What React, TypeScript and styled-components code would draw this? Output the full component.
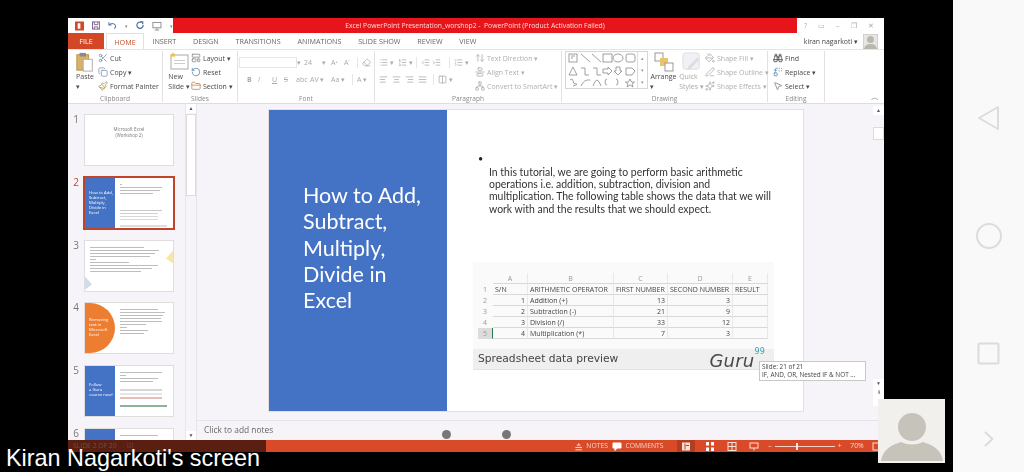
import styled, { createGlobalStyle } from "styled-components";
import {
  Scissors, Copy, Paintbrush, LayoutTemplate, RotateCcw, FolderClosed, Binoculars, Replace, MousePointer2, PaintBucket, PenLine, Sparkles,
  List, ListOrdered, Indent, Outdent, AlignLeft, AlignCenter, AlignRight, AlignJustify, Columns2, ListCollapse, ArrowUpDown, AlignVerticalJustifyCenter, Network,
  Eraser,
} from "lucide-react";

const GlobalStyle = createGlobalStyle`
  html, body {
    margin: 0;
    padding: 0;
    background: #000;
    font-family: "Open Sans", "Liberation Sans", sans-serif;
  }
`;

const Screen = styled.div`
  position: relative;
  width: 1024px;
  height: 472px;
  display: flex;
  overflow: hidden;
  background: #000;
`;

const VideoArea = styled.div`
  flex: 1;
  padding: 18px 69px 20px 68px;
  min-width: 0;
`;

const PptWindow = styled.div`
  height: 434px;
  display: flex;
  flex-direction: column;
  background: #fff;
  filter: blur(0.35px);
`;

/* title bar */
const TitleBar = styled.div`
  height: 15px;
  display: flex;
  flex: none;
`;

const Qat = styled.div`
  width: 105px;
  display: flex;
  align-items: center;
  gap: 8px;
  padding-left: 7px;
  box-sizing: border-box;
  background: #fff;
  color: #888;
  font-size: 5px;
`;

const RedTitle = styled.div`
  flex: 1;
  background: #e8141c;
  color: #ffd9d2;
  font-size: 6.8px;
  display: flex;
  align-items: center;
  justify-content: center;
  padding-right: 20px;
  white-space: nowrap;
`;

const WinButtons = styled.div`
  width: 87px;
  display: flex;
  align-items: center;
  gap: 11px;
  padding-left: 7px;
  box-sizing: border-box;
  color: #aaa;
  font-size: 7px;
`;

/* tabs */
const TabRow = styled.div`
  height: 16px;
  display: flex;
  flex: none;
  align-items: stretch;
  font-size: 7.2px;
  color: #666;
`;

const FileTab = styled.div`
  width: 36px;
  background: #d24726;
  color: #fff;
  display: flex;
  align-items: center;
  justify-content: center;
  margin-right: 2px;
`;

const HomeTab = styled.div`
  width: 38px;
  border: 1px solid #e2e2e2;
  border-bottom: none;
  color: #c8502f;
  display: flex;
  align-items: center;
  justify-content: center;
  box-sizing: border-box;
`;

const Tab = styled.div`
  padding: 0 8.4px;
  display: flex;
  align-items: center;
  white-space: nowrap;
`;

const UserBox = styled.div`
  margin-left: auto;
  display: flex;
  align-items: center;
  gap: 5px;
  padding-right: 6px;
  color: #444;
  font-size: 6.9px;
`;

/* ribbon */
const Ribbon = styled.div`
  height: 55px;
  flex: none;
  display: flex;
  border-top: 1px solid #e4e4e4;
  border-bottom: 1px solid #ddd;
  box-sizing: border-box;
  color: #444;
  font-size: 7px;
  position: relative;
`;

const Group = styled.div<{ $w: number }>`
  width: ${(p) => p.$w}px;
  flex: none;
  display: flex;
  flex-direction: column;
  box-sizing: border-box;
  border-right: 1px solid #e2e2e2;
  margin: 1px 0;
`;

const GroupBody = styled.div<{ $pad?: number }>`
  flex: 1;
  display: flex;
  padding-left: ${(p) => p.$pad ?? 0}px;
  min-height: 0;
`;

const GroupLabel = styled.div`
  height: 9px;
  text-align: center;
  color: #8a8a8a;
  font-size: 6.6px;
  line-height: 11px;
`;

const BigButton = styled.div<{ $w: number; $off?: boolean }>`
  width: ${(p) => p.$w}px;
  flex: none;
  display: flex;
  flex-direction: column;
  align-items: center;
  line-height: 10px;
  font-size: 7px;
  white-space: nowrap;
  color: ${(p) => (p.$off ? "#aaa" : "#4a4a4a")};
`;

const IconSlot = styled.div`
  height: 21px;
  flex: none;
  display: flex;
  align-items: center;
`;

const Stack = styled.div`
  display: flex;
  flex-direction: column;
  flex: none;
`;

const SmallButton = styled.div<{ $off?: boolean }>`
  height: 14px;
  display: flex;
  align-items: center;
  gap: 2px;
  white-space: nowrap;
  color: ${(p) => (p.$off ? "#b0b0b0" : "#4a4a4a")};
`;

const FontColumn = styled.div`
  display: flex;
  flex-direction: column;
  gap: 4px;
  padding: 5px 0 0 1px;
`;

const ToolRow = styled.div`
  height: 13px;
  display: flex;
  align-items: center;
  color: #aaa;
  font-size: 7px;
  white-space: nowrap;
`;

const FontInput = styled.div`
  width: 58px;
  height: 11px;
  border: 1px solid #e6e6e6;
  box-sizing: border-box;
`;

const ToolSlot = styled.span<{ $w: number; $b?: boolean; $i?: boolean; $u?: boolean; $s?: boolean }>`
  width: ${(p) => p.$w}px;
  flex: none;
  display: inline-flex;
  align-items: center;
  font-weight: ${(p) => (p.$b ? 700 : 400)};
  font-style: ${(p) => (p.$i ? "italic" : "normal")};
  text-decoration: ${(p) => (p.$u ? "underline" : p.$s ? "line-through" : "none")};
`;

const VDivider = styled.span<{ $mr?: number }>`
  width: 1px;
  height: 11px;
  flex: none;
  background: #e6e6e6;
  margin-right: ${(p) => p.$mr ?? 4}px;
`;

const ParagraphLeft = styled.div`
  width: 96px;
  flex: none;
  display: flex;
  flex-direction: column;
  gap: 4px;
  padding: 5px 0 0 4px;
  box-sizing: border-box;
  margin-right: 4px;
`;

const Gallery = styled.div`
  width: 83px;
  height: 38px;
  flex: none;
  display: flex;
  border: 1px solid #d6d6d6;
  box-sizing: border-box;
  margin: 0 1px 0 3px;
`;

const GalleryScroll = styled.div`
  width: 9px;
  margin-left: auto;
  border-left: 1px solid #ddd;
  display: flex;
  flex-direction: column;
  justify-content: space-around;
  align-items: center;
  font-size: 5px;
  color: #999;
`;

const CollapseMark = styled.div`
  position: absolute;
  right: 5px;
  bottom: 0;
  color: #777;
  font-size: 8px;
`;

/* workspace */
const Workspace = styled.div`
  flex: 1;
  min-height: 0;
  display: flex;
  background: #f6f4f8;
`;

const SlidePanel = styled.div`
  width: 129px;
  flex: none;
  display: flex;
  border-right: 1px solid #e6e4ea;
  box-sizing: border-box;
  overflow: hidden;
`;

const ThumbList = styled.div`
  width: 117px;
  padding-top: 10px;
  display: flex;
  flex-direction: column;
  gap: 10.8px;
`;

const ThumbRow = styled.div`
  display: flex;
  flex: none;
  font-size: 10px;
`;

const ThumbNumber = styled.div<{ $active?: boolean }>`
  width: 16px;
  text-align: right;
  padding-right: 5px;
  box-sizing: border-box;
  line-height: 10px;
  color: ${(p) => (p.$active ? "#c0492f" : "#777")};
`;

const Thumb = styled.div<{ $active?: boolean }>`
  width: ${(p) => (p.$active ? 92 : 90)}px;
  height: ${(p) => (p.$active ? 54 : 52)}px;
  margin: ${(p) => (p.$active ? "-1px" : "0")};
  flex: none;
  position: relative;
  display: flex;
  box-sizing: border-box;
  background: #fff;
  overflow: hidden;
  border: ${(p) => (p.$active ? "2px solid #c0432a" : "1px solid #dedede")};
`;

const ThumbSide = styled.div<{ $color?: string; $round?: boolean; $pt?: number }>`
  width: 30px;
  flex: none;
  padding: ${(p) => p.$pt ?? 12}px 0 0 4px;
  box-sizing: border-box;
  background: ${(p) => p.$color ?? "#4472c4"};
  color: #fff;
  font-size: 4.2px;
  line-height: 5px;
  ${(p) => (p.$round ? "border-radius: 0 26px 26px 0;" : "")}
`;

const ThumbBody = styled.div`
  flex: 1;
  display: flex;
  flex-direction: column;
  gap: 2px;
  padding: 6px 6px 0 5px;
  min-width: 0;
`;

const Bar = styled.div<{ $w: number; $c?: string; $h?: number }>`
  width: ${(p) => p.$w}%;
  height: ${(p) => p.$h ?? 1}px;
  flex: none;
  background: ${(p) => p.$c ?? "#bdbdbd"};
`;

const TitleThumbText = styled.div`
  flex: 1;
  text-align: center;
  padding-top: 12px;
  font-size: 4.4px;
  line-height: 5.5px;
  color: #777;
`;

const Corner = styled.div<{ $c: string; $left?: boolean }>`
  position: absolute;
  ${(p) => (p.$left ? "left: 0; bottom: 1px;" : "right: 0; top: 10px;")}
  width: 7px;
  height: 13px;
  background: ${(p) => p.$c};
  clip-path: ${(p) =>
    p.$left ? "polygon(0 0, 100% 60%, 0 100%)" : "polygon(100% 0, 0 60%, 100% 100%)"};
`;

const PanelScroll = styled.div`
  width: 10px;
  margin-left: 1px;
  border-left: 1px solid #e8e6ea;
  display: flex;
  flex-direction: column;
  align-items: center;
  color: #555;
  font-size: 5px;
`;

const ScrollButton = styled.div`
  width: 100%;
  height: 9px;
  flex: none;
  background: #fff;
  display: flex;
  align-items: center;
  justify-content: center;
  line-height: 1;
`;

const ScrollThumb = styled.div<{ $h: number; $top?: number }>`
  width: 100%;
  height: ${(p) => p.$h}px;
  margin-top: ${(p) => p.$top ?? 0}px;
  background: #fff;
  border: 1px solid #dcdcdc;
  box-sizing: border-box;
  flex: none;
`;

const ScrollGap = styled.div`
  flex: 1;
`;

const Editor = styled.div`
  flex: 1;
  min-width: 0;
  display: flex;
  flex-direction: column;
`;

const EditorTop = styled.div`
  flex: 1;
  min-height: 0;
  display: flex;
`;

const Stage = styled.div`
  flex: 1;
  padding: 6px 0 0 72px;
`;

const Slide = styled.div`
  width: 534px;
  height: 301px;
  display: flex;
  background: #fff;
  box-shadow: 0 0 0 1px #e2e0e4;
`;

const SlideSide = styled.div`
  width: 178px;
  flex: none;
  background: #4472c4;
  color: #fff;
  box-sizing: border-box;
  padding: 72px 0 0 34px;
  font-family: Lato, "Open Sans", sans-serif;
  font-size: 21.5px;
  line-height: 26.3px;
`;

const SlideMain = styled.div`
  flex: 1;
  min-width: 0;
  padding: 56px 0 0 26px;
  display: flex;
  flex-direction: column;
`;

const BodyText = styled.div`
  padding-left: 16px;
  box-sizing: border-box;
  position: relative;
  font-family: Lato, "Open Sans", sans-serif;
  font-size: 10.45px;
  line-height: 12.2px;
  color: #333;
  white-space: nowrap;
  &::before {
    content: "•";
    position: absolute;
    left: 5px;
    top: -13px;
    font-size: 9px;
    color: #222;
  }
`;

const SheetPreview = styled.div`
  width: 301px;
  height: 108px;
  margin-top: 47px;
  display: flex;
  flex-direction: column;
  background: #fafafa;
`;

const SheetGrid = styled.div`
  display: grid;
  grid-template-columns: 15px 35px 86px 54px 65px 35px;
  grid-auto-rows: 11px;
  margin: 11px 0 0 5px;
  height: 66px;
  font-family: "Open Sans", sans-serif;
  font-size: 7px;
  line-height: 11px;
  color: #444;
`;

const Cell = styled.div<{ $head?: boolean; $right?: boolean; $sel?: boolean; $line?: boolean }>`
  white-space: nowrap;
  overflow: visible;
  padding: 0 2px;
  text-align: ${(p) => (p.$head ? "center" : p.$right ? "right" : "left")};
  color: ${(p) => (p.$head ? "#999" : "#444")};
  background: ${(p) => (p.$sel ? "#dcdcdc" : "transparent")};
  border-bottom: 1px solid ${(p) => (p.$line ? "#d8d8d8" : "transparent")};
  border-right: 1px solid ${(p) => (p.$sel ? "#2a7a4f" : p.$line ? "#e8e8e8" : "transparent")};
  box-sizing: border-box;
`;

const SheetCaption = styled.div`
  margin-top: 10px;
  height: 21px;
  background: #efefef;
  display: flex;
  align-items: center;
  justify-content: space-between;
  padding: 0 9px 0 5px;
  border-bottom: 1px solid #e2e2e2;
  box-sizing: border-box;
  color: #444;
  font-family: "DejaVu Sans", sans-serif;
  font-size: 10.7px;
  position: relative;
`;

const GuruMark = styled.div`
  font-family: "DejaVu Sans", sans-serif;
  font-style: italic;
  font-size: 18px;
  line-height: 20px;
  letter-spacing: 0.2px;
  color: #4a4a4a;
  display: flex;
  padding-top: 5px;
  sup {
    font-size: 8px;
    font-style: normal;
    color: #35a3b8;
    line-height: 8px;
    margin-top: -3px;
  }
`;

const SlideTip = styled.div`
  position: absolute;
  left: 286px;
  top: 12px;
  width: 107px;
  height: 20px;
  padding: 1px 0 0 2px;
  box-sizing: border-box;
  background: #fff;
  border: 1px solid #c8c8c8;
  color: #444;
  font-family: "Open Sans", sans-serif;
  font-size: 6.4px;
  line-height: 8.5px;
  white-space: nowrap;
  z-index: 3;
`;

const EditorScroll = styled.div`
  width: 11px;
  flex: none;
  padding: 2px 0 14px;
  display: flex;
  flex-direction: column;
  color: #555;
  font-size: 5px;
`;

const NotesBar = styled.div`
  height: 20px;
  flex: none;
  border-top: 1px solid #e6e4ea;
  box-sizing: border-box;
  display: flex;
  align-items: center;
  padding: 0 0 2px 7px;
  font-size: 8.4px;
  color: #666;
`;

/* status bar */
const StatusBar = styled.div`
  height: 12px;
  flex: none;
  display: flex;
  align-items: center;
  background: #d94a29;
  color: #f6d3c6;
  font-size: 6.8px;
  line-height: 8px;
`;

const StatusLeft = styled.div`
  display: flex;
  align-items: center;
  gap: 10px;
  padding-left: 5px;
  color: #f0b8a6;
`;

const StatusRight = styled.div`
  margin-left: auto;
  display: flex;
  align-items: center;
  height: 100%;
`;

const StatusItem = styled.div<{ $w: number; $on?: boolean; $ml?: number }>`
  width: ${(p) => p.$w}px;
  margin-left: ${(p) => p.$ml ?? 0}px;
  height: 100%;
  display: flex;
  align-items: center;
  justify-content: center;
  gap: 3px;
  white-space: nowrap;
  background: ${(p) => (p.$on ? "#b43c20" : "transparent")};
`;

const ZoomTrack = styled.div`
  width: 60px;
  height: 1px;
  background: #f6d3c6;
  position: relative;
  &::after {
    content: "";
    position: absolute;
    left: 21px;
    top: -3px;
    width: 2px;
    height: 7px;
    background: #fbeee8;
  }
`;

/* android nav */
const NavBar = styled.div`
  width: 71px;
  flex: none;
  background: #f9f9f9;
  display: flex;
  flex-direction: column;
  align-items: center;
  box-sizing: border-box;
`;

const NavIcon = styled.svg<{ $mt: number }>`
  margin-top: ${(p) => p.$mt}px;
  fill: none;
  stroke: #dcdcdc;
  stroke-width: 2;
  stroke-linejoin: round;
  stroke-linecap: round;
  flex: none;
`;

/* overlays from the meeting app */
const Caption = styled.div`
  position: absolute;
  left: 0;
  top: 440px;
  width: 266px;
  height: 32px;
  box-sizing: border-box;
  padding: 8px 0 0 6px;
  background: rgba(0, 0, 0, 0.58);
  color: #fff;
  font-family: "Liberation Sans", Arial, sans-serif;
  font-size: 23.4px;
  line-height: 20px;
  white-space: nowrap;
  z-index: 5;
`;

const AvatarTile = styled.div`
  position: absolute;
  left: 878px;
  top: 399px;
  width: 67px;
  height: 64px;
  background: #f2f0ec;
  z-index: 5;
`;

const PagerDot = styled.div<{ $x: number }>`
  position: absolute;
  left: ${(p) => p.$x}px;
  top: 430px;
  width: 9px;
  height: 9px;
  border-radius: 50%;
  background: #777;
  z-index: 5;
`;

const PasteIcon = () => (
  <svg width="20" height="20" viewBox="0 0 20 22">
    <rect x="1" y="3" width="13" height="17" fill="#d9b26a" stroke="#b8924c" />
    <rect x="4" y="1" width="7" height="4" fill="#8a8a8a" />
    <rect x="8" y="8" width="10" height="13" fill="#fff" stroke="#aaa" />
  </svg>
);

const NewSlideIcon = () => (
  <svg width="20" height="19" viewBox="0 0 20 19">
    <rect x="2" y="3" width="17" height="14" fill="#fff" stroke="#aaa" />
    <rect x="5" y="8" width="11" height="1" fill="#ccc" />
    <rect x="5" y="11" width="11" height="1" fill="#ccc" />
    <path d="M4 0 l1 2 2 0-1.500 1.500 .7 2-2.200-1.200-2.200 1.200 .7-2L1 2l2 0z" fill="#e8c45c" />
  </svg>
);

const ArrangeIcon = () => (
  <svg width="20" height="20" viewBox="0 0 20 20">
    <rect x="1" y="1" width="8" height="8" fill="#fff" stroke="#999" />
    <rect x="6" y="6" width="8" height="8" fill="#e9c46a" />
    <rect x="11" y="11" width="8" height="8" fill="#fff" stroke="#999" />
  </svg>
);

const QuickIcon = () => (
  <svg width="20" height="20" viewBox="0 0 22 22">
    <rect x="1" y="1" width="18" height="18" rx="3" fill="#f3eff7" stroke="#ddd" />
    <path d="M19 8 L10 18 l-4 2 1-4 L17 6z" fill="#ddd" />
  </svg>
);

const GalleryShapes = () => (
  <svg width="71" height="36" viewBox="0 0 71 36" fill="none" stroke="#888" strokeWidth="0.8">
    <rect x="3" y="2" width="8" height="8" />
    <path d="M5 4h4M5 6h2" />
    <path d="M15 2l9 8M26 2l9 8" />
    <rect x="37" y="2" width="9" height="8" />
    <ellipse cx="52" cy="6" rx="5" ry="4" />
    <rect x="60" y="2" width="9" height="8" rx="2" />
    <path d="M3 23l4-8 4 8z" />
    <path d="M15 16h4v7h4M27 16h4v7h4" />
    <path d="M37 17h5v-2l4 4-4 4v-2h-5z" />
    <path d="M50 15h4v4h2l-4 4-4-4h2z" />
    <path d="M60 16h6l3 3-3 4h-6z" />
    <path d="M4 28q3-2 3 1t3 3-3 2" />
    <path d="M15 34q3-7 9-6M27 34q2-6 4-6t4 6" />
    <path d="M41 27q-2 0-2 3t2 3M50 27q2 0 2 3t-2 3" />
    <path d="M64 27l1.500 3h3l-2.500 2 1 3-3-2-3 2 1-3-2.500-2h3z" />
  </svg>
);

const StatusGlyph = ({ kind }: { kind: "notes" | "comment" | "normal" | "sorter" | "reading" | "show" | "fit" }) => (
  <svg width="10" height="9" viewBox="0 0 10 9" fill="none" stroke="#f9e2d9" strokeWidth="1">
    {kind === "notes" && <path d="M3 3h4M1.500 5.500h7M1.500 8h7M5 1v2" />}
    {kind === "comment" && <path d="M1 1h8v5H5L3 8.500V6H1z" fill="#fff" stroke="#fff" />}
    {kind === "normal" && (
      <>
        <rect x="1" y=".5" width="8" height="8" fill="#f9e2d9" stroke="none" />
        <path d="M4 1.500v6M5 3.500h3" stroke="#b43c20" />
      </>
    )}
    {kind === "sorter" && <path d="M1 0h3v3.500H1zM6 0h3v3.500H6zM1 5.500h3V9H1zM6 5.500h3V9H6z" fill="#fff" stroke="none" />}
    {kind === "reading" && (
      <>
        <rect x="1" y=".5" width="8" height="8" />
        <path d="M5 .5v8M1 4.500h8" />
      </>
    )}
    {kind === "show" && (
      <>
        <rect x="1" y="1" width="8" height="5" />
        <path d="M5 6v2.500" />
      </>
    )}
    {kind === "fit" && <rect x="1" y="1" width="8" height="7" />}
  </svg>
);

const Thumbs = () => (
  <>
    <ThumbRow>
      <ThumbNumber>1</ThumbNumber>
      <Thumb>
        <TitleThumbText>
          Microsoft Excel
          <br />
          (Workshop 2)
        </TitleThumbText>
      </Thumb>
    </ThumbRow>
    <ThumbRow>
      <ThumbNumber $active>2</ThumbNumber>
      <Thumb $active>
        <ThumbSide>
          How to Add,
          <br />
          Subtract,
          <br />
          Multiply,
          <br />
          Divide in
          <br />
          Excel
        </ThumbSide>
        <ThumbBody>
          <Bar $w={5} />
          <Bar $w={90} />
          <Bar $w={85} />
          <Bar $w={70} />
          <Bar $w={0} $h={12} />
          <Bar $w={90} $c="#c8c8c8" />
          <Bar $w={80} $c="#d0d0d0" />
          <Bar $w={80} $c="#d8d8d8" />
          <Bar $w={80} $c="#d8d8d8" />
          <Bar $w={0} />
          <Bar $w={100} $c="#ddd" $h={2} />
        </ThumbBody>
      </Thumb>
    </ThumbRow>
    <ThumbRow>
      <ThumbNumber>3</ThumbNumber>
      <Thumb>
        <ThumbBody>
          <Bar $w={70} />
          <Bar $w={90} />
          <Bar $w={85} />
          <Bar $w={78} />
          <Bar $w={8} />
          <Bar $w={50} />
          <Bar $w={88} />
          <Bar $w={80} />
          <Bar $w={66} />
        </ThumbBody>
        <Corner $c="#f8e6a6" />
        <Corner $c="#d2dbee" $left />
      </Thumb>
    </ThumbRow>
    <ThumbRow>
      <ThumbNumber>4</ThumbNumber>
      <Thumb>
        <ThumbSide $color="#ed7d31" $round $pt={14}>
          Removing
          <br />
          text in
          <br />
          Microsoft
          <br />
          Excel
        </ThumbSide>
        <ThumbBody>
          <Bar $w={80} />
          <Bar $w={95} />
          <Bar $w={92} />
          <Bar $w={88} />
          <Bar $w={90} />
          <Bar $w={55} />
          <Bar $w={14} />
          <Bar $w={60} />
          <Bar $w={50} />
        </ThumbBody>
      </Thumb>
    </ThumbRow>
    <ThumbRow>
      <ThumbNumber>5</ThumbNumber>
      <Thumb>
        <ThumbSide $pt={16}>
          Follow
          <br />
          a Guru
          <br />
          course now!
        </ThumbSide>
        <ThumbBody>
          <Bar $w={90} />
          <Bar $w={12} />
          <Bar $w={80} />
          <Bar $w={70} />
          <Bar $w={0} $h={3} />
          <Bar $w={90} $c="#d6d6d6" $h={2} />
          <Bar $w={90} $c="#e6e6e6" $h={2} />
          <Bar $w={90} $c="#e8bdb5" $h={2} />
          <Bar $w={0} $h={2} />
          <Bar $w={100} $c="#8ab59b" $h={2} />
        </ThumbBody>
      </Thumb>
    </ThumbRow>
    <ThumbRow>
      <ThumbNumber>6</ThumbNumber>
      <Thumb>
        <ThumbSide />
        <ThumbBody>
          <Bar $w={80} />
        </ThumbBody>
      </Thumb>
    </ThumbRow>
  </>
);

const sheetRows = [
  ["1", "S/N", "ARITHMETIC OPERATOR", "FIRST NUMBER", "SECOND NUMBER", "RESULT"],
  ["2", "1", "Addition (+)", "13", "3", ""],
  ["3", "2", "Subtraction (-)", "21", "9", ""],
  ["4", "3", "Division (/)", "33", "12", ""],
  ["5", "4", "Multiplication (*)", "7", "3", ""],
];

function App() {
  return (
    <Screen>
      <GlobalStyle />
      <VideoArea>
        <PptWindow>
          <TitleBar>
            <Qat>
              <svg width="10" height="10" viewBox="0 0 10 10">
                <rect width="10" height="10" fill="#d24726" />
                <rect x="3" y="2" width="3" height="6" fill="#fff" />
              </svg>
              <svg width="9" height="9" viewBox="0 0 9 9" fill="none" stroke="#7a5b8a">
                <rect x="0.500" y="0.500" width="8" height="8" />
                <path d="M2.500 0.500v3h4v-3M2.500 8.500v-2.500h4v2.500" />
              </svg>
              <svg width="10" height="9" viewBox="0 0 10 9" fill="none" stroke="#5a7ab0" strokeWidth="1.200">
                <path d="M1 1v3h3M1 4q3-3 6-1t0 5" />
              </svg>
              <span>▾</span>
              <svg width="9" height="9" viewBox="0 0 9 9" fill="none" stroke="#4a6a9a" strokeWidth="1.300">
                <path d="M6 1a3.500 3.500 0 1 0 2 3M5 .5h2.500V3" />
              </svg>
              <svg width="11" height="10" viewBox="0 0 11 10" fill="none" stroke="#888">
                <rect x="1" y="1" width="9" height="6" />
                <path d="M5.500 7v2M3 9.500h5" />
              </svg>
              <span>▾</span>
            </Qat>
            <RedTitle>Excel PowerPoint Presentation_worshop2 -&nbsp; PowerPoint (Product Activation Failed)</RedTitle>
            <WinButtons>
              <span>?</span>
              <span>▭</span>
              <span>–</span>
              <span>❐</span>
              <span>✕</span>
            </WinButtons>
          </TitleBar>

          <TabRow>
            <FileTab>FILE</FileTab>
            <HomeTab>HOME</HomeTab>
            <Tab>INSERT</Tab>
            <Tab>DESIGN</Tab>
            <Tab>TRANSITIONS</Tab>
            <Tab>ANIMATIONS</Tab>
            <Tab>SLIDE SHOW</Tab>
            <Tab>REVIEW</Tab>
            <Tab>VIEW</Tab>
            <UserBox>
              kiran nagarkoti ▾
              <svg width="15" height="15" viewBox="0 0 15 15">
                <rect width="15" height="15" fill="#e8e6e2" stroke="#bbb" />
                <circle cx="7.500" cy="5.500" r="3.500" fill="#b9b7ae" />
                <path d="M1 15q1-5 6.500-5T14 15z" fill="#b9b7ae" />
              </svg>
            </UserBox>
          </TabRow>

          <Ribbon>
            <Group $w={95}>
              <GroupBody $pad={4}>
                <BigButton $w={26}>
                  <IconSlot>
                    <PasteIcon />
                  </IconSlot>
                  Paste
                  <br />▾
                </BigButton>
                <Stack>
                  <SmallButton>
                    <Scissors size={10} color="#7a8fb5" /> Cut
                  </SmallButton>
                  <SmallButton>
                    <Copy size={10} color="#8a9ab0" /> Copy ▾
                  </SmallButton>
                  <SmallButton>
                    <Paintbrush size={10} color="#b59a50" /> Format Painter
                  </SmallButton>
                </Stack>
              </GroupBody>
              <GroupLabel>Clipboard</GroupLabel>
            </Group>
            <Group $w={75}>
              <GroupBody $pad={4}>
                <BigButton $w={24}>
                  <IconSlot>
                    <NewSlideIcon />
                  </IconSlot>
                  New
                  <br />
                  Slide ▾
                </BigButton>
                <Stack>
                  <SmallButton>
                    <LayoutTemplate size={10} color="#8a8a8a" /> Layout ▾
                  </SmallButton>
                  <SmallButton>
                    <RotateCcw size={10} color="#5a8ab0" /> Reset
                  </SmallButton>
                  <SmallButton>
                    <FolderClosed size={10} color="#c88a50" /> Section ▾
                  </SmallButton>
                </Stack>
              </GroupBody>
              <GroupLabel>Slides</GroupLabel>
            </Group>
            <Group $w={137}>
              <GroupBody>
                <FontColumn>
                  <ToolRow>
                    <FontInput />
                    <ToolSlot $w={7}>▾</ToolSlot>
                    <ToolSlot $w={18}>24</ToolSlot>
                    <ToolSlot $w={9}>▾</ToolSlot>
                    <ToolSlot $w={13}>A⁺</ToolSlot>
                    <ToolSlot $w={13}>A⁻</ToolSlot>
                    <VDivider />
                    <Eraser size={9} />
                  </ToolRow>
                  <ToolRow>
                    <ToolSlot $w={8} />
                    <ToolSlot $w={11} $b>B</ToolSlot>
                    <ToolSlot $w={14} $i>I</ToolSlot>
                    <ToolSlot $w={12} $u>U</ToolSlot>
                    <ToolSlot $w={12} $s>S</ToolSlot>
                    <ToolSlot $w={14}>abc</ToolSlot>
                    <ToolSlot $w={21}>AV ▾</ToolSlot>
                    <ToolSlot $w={21}>Aa ▾</ToolSlot>
                    <VDivider />
                    <ToolSlot $w={14}>A ▾</ToolSlot>
                  </ToolRow>
                </FontColumn>
              </GroupBody>
              <GroupLabel>Font</GroupLabel>
            </Group>
            <Group $w={187}>
              <GroupBody>
                <ParagraphLeft>
                  <ToolRow>
                    <List size={9} />
                    <ToolSlot $w={10}>&nbsp;▾</ToolSlot>
                    <ListOrdered size={9} />
                    <ToolSlot $w={9}>&nbsp;▾</ToolSlot>
                    <VDivider />
                    <Outdent size={9} />
                    <ToolSlot $w={2} />
                    <Indent size={9} />
                    <ToolSlot $w={8} />
                    <VDivider />
                    <ListCollapse size={9} />
                    <ToolSlot $w={8}>&nbsp;▾</ToolSlot>
                  </ToolRow>
                  <ToolRow>
                    <AlignLeft size={9} />
                    <ToolSlot $w={4} />
                    <AlignCenter size={9} />
                    <ToolSlot $w={4} />
                    <AlignRight size={9} />
                    <ToolSlot $w={4} />
                    <AlignJustify size={9} />
                    <ToolSlot $w={6} />
                    <VDivider />
                    <Columns2 size={9} />
                    <ToolSlot $w={8}>&nbsp;▾</ToolSlot>
                  </ToolRow>
                </ParagraphLeft>
                <Stack>
                  <SmallButton $off>
                    <ArrowUpDown size={10} /> Text Direction ▾
                  </SmallButton>
                  <SmallButton $off>
                    <AlignVerticalJustifyCenter size={10} /> Align Text ▾
                  </SmallButton>
                  <SmallButton $off>
                    <Network size={10} /> Convert to SmartArt ▾
                  </SmallButton>
                </Stack>
              </GroupBody>
              <GroupLabel>Paragraph</GroupLabel>
            </Group>
            <Group $w={206}>
              <GroupBody>
                <Gallery>
                  <GalleryShapes />
                  <GalleryScroll>
                    <span>▴</span>
                    <span>▾</span>
                    <span>▾</span>
                  </GalleryScroll>
                </Gallery>
                <BigButton $w={29}>
                  <IconSlot>
                    <ArrangeIcon />
                  </IconSlot>
                  Arrange
                  <br />▾
                </BigButton>
                <BigButton $w={27} $off>
                  <IconSlot>
                    <QuickIcon />
                  </IconSlot>
                  Quick
                  <br />
                  Styles ▾
                </BigButton>
                <Stack>
                  <SmallButton $off>
                    <PaintBucket size={10} /> Shape Fill ▾
                  </SmallButton>
                  <SmallButton $off>
                    <PenLine size={10} /> Shape Outline ▾
                  </SmallButton>
                  <SmallButton $off>
                    <Sparkles size={10} /> Shape Effects ▾
                  </SmallButton>
                </Stack>
              </GroupBody>
              <GroupLabel>Drawing</GroupLabel>
            </Group>
            <Group $w={57}>
              <GroupBody $pad={5}>
                <Stack>
                  <SmallButton>
                    <Binoculars size={10} color="#444" /> Find
                  </SmallButton>
                  <SmallButton>
                    <Replace size={10} color="#5a8ab0" /> Replace ▾
                  </SmallButton>
                  <SmallButton>
                    <MousePointer2 size={10} color="#888" /> Select ▾
                  </SmallButton>
                </Stack>
              </GroupBody>
              <GroupLabel>Editing</GroupLabel>
            </Group>
            <CollapseMark>︿</CollapseMark>
          </Ribbon>

          <Workspace>
            <SlidePanel>
              <ThumbList>
                <Thumbs />
              </ThumbList>
              <PanelScroll>
                <ScrollButton>▲</ScrollButton>
                <ScrollThumb $h={82} $top={1} />
                <ScrollGap />
                <ScrollButton>▼</ScrollButton>
              </PanelScroll>
            </SlidePanel>
            <Editor>
              <EditorTop>
                <Stage>
                  <Slide>
                    <SlideSide>
                      How to Add,
                      <br />
                      Subtract,
                      <br />
                      Multiply,
                      <br />
                      Divide in
                      <br />
                      Excel
                    </SlideSide>
                    <SlideMain>
                      <BodyText>
                        In this tutorial, we are going to perform basic arithmetic
                        <br />
                        operations i.e. addition, subtraction, division and
                        <br />
                        multiplication. The following table shows the data that we will
                        <br />
                        work with and the results that we should expect.
                      </BodyText>
                      <SheetPreview>
                        <SheetGrid>
                          {["", "A", "B", "C", "D", "E"].map((h, i) => (
                            <Cell key={i} $head $line={i > 0}>
                              {h}
                            </Cell>
                          ))}
                          {sheetRows.map((row, r) =>
                            row.map((c, i) => (
                              <Cell
                                key={`${r}-${i}`}
                                $head={i === 0}
                                $sel={i === 0 && r === 4}
                                $right={r > 0 && (i === 1 || i > 2)}
                                $line={i > 0}
                              >
                                {c}
                              </Cell>
                            ))
                          )}
                        </SheetGrid>
                        <SheetCaption>
                          Spreadsheet data preview
                          <GuruMark>
                            Guru<sup>99</sup>
                          </GuruMark>
                          <SlideTip>
                            Slide: 21 of 21
                            <br />
                            IF, AND, OR, Nested IF &amp; NOT ...
                          </SlideTip>
                        </SheetCaption>
                      </SheetPreview>
                    </SlideMain>
                  </Slide>
                </Stage>
                <EditorScroll>
                  <ScrollButton>▲</ScrollButton>
                  <ScrollThumb $h={13} $top={12} />
                  <ScrollGap />
                  <ScrollButton>▼</ScrollButton>
                  <ScrollButton>⇞</ScrollButton>
                  <ScrollButton>⇟</ScrollButton>
                </EditorScroll>
              </EditorTop>
              <NotesBar>Click to add notes</NotesBar>
            </Editor>
          </Workspace>

          <StatusBar>
            <StatusLeft>
              <span>SLIDE 2 OF 20</span>
              <span>☑</span>
            </StatusLeft>
            <StatusRight>
              <StatusItem $w={34}>
                <StatusGlyph kind="notes" /> NOTES
              </StatusItem>
              <StatusItem $w={60}>
                <StatusGlyph kind="comment" /> COMMENTS
              </StatusItem>
              <StatusItem $w={18} $ml={9} $on>
                <StatusGlyph kind="normal" />
              </StatusItem>
              <StatusItem $w={22} $ml={4}>
                <StatusGlyph kind="sorter" />
              </StatusItem>
              <StatusItem $w={22}>
                <StatusGlyph kind="reading" />
              </StatusItem>
              <StatusItem $w={22}>
                <StatusGlyph kind="show" />
              </StatusItem>
              <StatusItem $w={80}>
                – <ZoomTrack /> +
              </StatusItem>
              <StatusItem $w={24}>70%</StatusItem>
              <StatusItem $w={15}>
                <StatusGlyph kind="fit" />
              </StatusItem>
            </StatusRight>
          </StatusBar>
        </PptWindow>
      </VideoArea>

      <NavBar>
        <NavIcon $mt={104} width="24" height="28" viewBox="0 0 24 28">
          <path d="M21 3 L2 14 L21 25 Z" />
        </NavIcon>
        <NavIcon $mt={91} width="26" height="26" viewBox="0 0 26 26">
          <circle cx="13" cy="13" r="12" />
        </NavIcon>
        <NavIcon $mt={93} width="23" height="23" viewBox="0 0 23 23">
          <rect x="1.500" y="1.500" width="20" height="20" rx="1" />
        </NavIcon>
        <NavIcon $mt={66} width="10" height="16" viewBox="0 0 10 16">
          <path d="M1.500 1.500 L8.500 8 L1.500 14.500" />
        </NavIcon>
      </NavBar>

      <PagerDot $x={442} />
      <PagerDot $x={502} />
      <AvatarTile>
        <svg width="67" height="64" viewBox="0 0 67 64">
          <circle cx="34" cy="28" r="14" fill="#c5c3ba" />
          <path d="M3 62 Q5 48 23 43 Q34 48 45 43 Q63 48 65 62 Z" fill="#c5c3ba" />
        </svg>
      </AvatarTile>
      <Caption>Kiran Nagarkoti's screen</Caption>
    </Screen>
  );
}

export default App;
